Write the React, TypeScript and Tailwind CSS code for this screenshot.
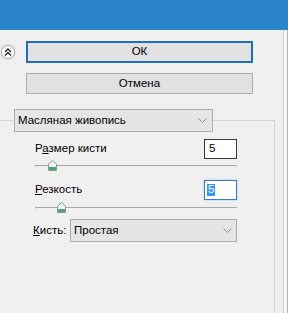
import React from 'react';

const font = { fontFamily: '"Liberation Sans", Arial, sans-serif' };

const Chevron: React.FC = () => (
  <svg width="9" height="6" viewBox="0 0 9 6" className="shrink-0">
    <path d="M0.5 0.5 L4.5 4.5 L8.5 0.5" fill="none" stroke="#8a8a8a" strokeWidth="1" />
  </svg>
);

const Thumb: React.FC = () => (
  <svg width="9" height="11" viewBox="0 0 9 11">
    <path d="M4.5 0.5 L8.5 4 L8.5 10.5 L0.5 10.5 L0.5 4 Z" fill="#eef6f0" stroke="#8c9b92" strokeWidth="1" />
    <rect x="1" y="7" width="7" height="3" fill="#4aa572" />
  </svg>
);

const Slider: React.FC<{ pos: number }> = ({ pos }) => (
  <div className="relative h-[11px] w-[202px]">
    <div className="absolute left-0 right-0 top-[5px] h-px bg-[#a8a8a8]" />
    <div className="absolute left-0 top-[4px] h-[3px] w-px bg-[#c4c4c4]" />
    <div className="absolute top-0" style={{ left: pos }}>
      <Thumb />
    </div>
  </div>
);

const App: React.FC = () => {
  return (
    <div className="w-[288px] h-[313px] bg-[#f0f0f0] flex flex-col overflow-hidden text-[11.5px] text-black" style={font}>
      <div className="h-[30px] bg-[#2b85cb] shrink-0" />
      <div className="flex flex-1">
        <div className="w-[283px] flex flex-col">
          <div className="flex items-center mt-[11px]">
            <div className="ml-[1px] w-[14px] h-[14px] rounded-full bg-white border border-[#b4b4b4] flex items-center justify-center shadow-[0_0_1px_#999]">
              <svg width="8" height="8" viewBox="0 0 8 8">
                <path d="M1 4 L4 1 L7 4 M1 7.5 L4 4.5 L7 7.5" fill="none" stroke="#222" strokeWidth="1.3" />
              </svg>
            </div>
            <button className="ml-[11px] w-[227px] h-[22px] bg-[#e1e1e1] border-2 border-[#1f6fc1] flex items-center justify-center leading-none">
              ОК
            </button>
          </div>
          <button className="ml-[26px] mt-[10px] w-[227px] h-[21px] bg-[#e1e1e1] border border-[#adadad] flex items-center justify-center leading-none">
            Отмена
          </button>
          <fieldset className="mt-[15px] w-[275px] flex-1 border-t border-r border-l-0 border-b-0 border-[#d6d6d6] p-0 m-0">
            <legend className="ml-[14px] p-0">
              <div className="w-[199px] h-[23px] bg-[#e5e5e5] border border-[#acacac] flex items-center justify-between pl-[3px] pr-[5px] leading-none">
                <span>Масляная живопись</span>
                <Chevron />
              </div>
            </legend>
            <div className="ml-[35px] w-[202px] flex flex-col">
              <div className="flex items-center justify-between mt-[7px]">
                <span>
                  Р<span className="underline">а</span>змер кисти
                </span>
                <div className="w-[33px] h-[20px] bg-white border border-[#3a3a3a] flex items-center pl-[4px] leading-none">5</div>
              </div>
              <div className="mt-[1px]">
                <Slider pos={13} />
              </div>
              <div className="flex items-center justify-between mt-[9px]">
                <span>
                  <span className="underline">Р</span>езкость
                </span>
                <div className="w-[33px] h-[20px] bg-white border border-[#3d7bc4] shadow-[0_0_2px_#9cc4ee] flex items-center pl-[2px] leading-none">
                  <span className="bg-[#3399ff] text-white px-px">5</span>
                </div>
              </div>
              <div className="mt-[2px]">
                <Slider pos={22} />
              </div>
              <div className="flex items-center mt-[6px] -ml-[2px]">
                <span className="w-[37px] shrink-0">
                  <span className="underline">К</span>исть:
                </span>
                <div className="w-[170px] h-[23px] bg-[#e5e5e5] border border-[#acacac] flex items-center justify-between pl-[3px] pr-[4px] leading-none">
                  <span>Простая</span>
                  <Chevron />
                </div>
              </div>
            </div>
          </fieldset>
        </div>
        <div className="w-px bg-[#cfcfcf]" />
        <div className="w-[3px] bg-[#f7f7f7]" />
        <div className="w-px bg-[#9fb6cc]" />
      </div>
    </div>
  );
};

export default App;
